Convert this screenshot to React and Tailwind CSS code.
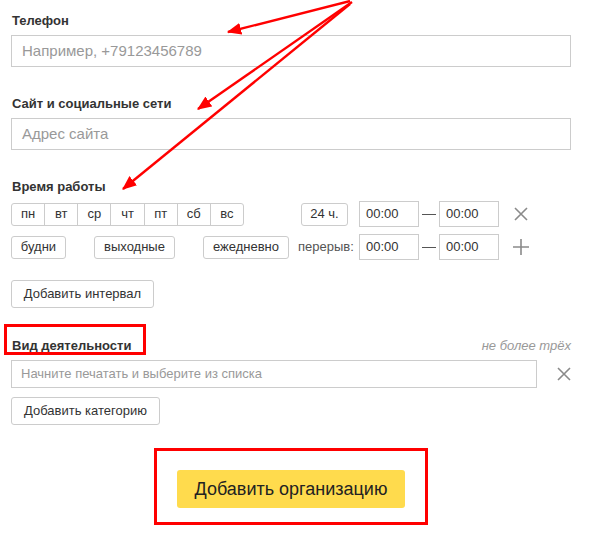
import React from "react";

const X = ({ className = "" }) => (
  <svg width="14" height="14" viewBox="0 0 14 14" className={className}>
    <path d="M1 1L13 13M13 1L1 13" stroke="#8a8a8a" strokeWidth="1.6" />
  </svg>
);

const Plus = () => (
  <svg width="16" height="16" viewBox="0 0 16 16">
    <path d="M8 0V16M0 8H16" stroke="#8a8a8a" strokeWidth="1.6" />
  </svg>
);

const Btn = ({ children, className = "" }) => (
  <div
    className={`flex items-center justify-center border border-[#ccc] rounded-[3px] bg-white text-[13px] text-[#333] ${className}`}
  >
    {children}
  </div>
);

const TimeInput = () => (
  <div className="w-[60px] h-[26px] border border-[#ccc] flex items-center pl-[6px] text-[13px] text-[#333]">
    00:00
  </div>
);

const Dash = () => (
  <div className="w-[20px] flex justify-center">
    <div className="w-[14px] h-px bg-[#555]" />
  </div>
);

export default function App() {
  const days = ["пн", "вт", "ср", "чт", "пт", "сб", "вс"];
  return (
    <div
      className="relative w-[591px] h-[535px] bg-white overflow-hidden"
      style={{ fontFamily: '"Liberation Sans", Arial, sans-serif' }}
    >
      <div className="px-[11px] w-[582px]">
        <div className="pt-[13px] leading-[16px] text-[13px] font-bold text-[#333] pl-px mb-[6px]">
          Телефон
        </div>
        <div className="w-[560px] h-[32px] border border-[#ccc] flex items-center pl-[10px] text-[15px] text-[#999]">
          Например, +79123456789
        </div>

        <div className="mt-[29px] leading-[16px] text-[13px] font-bold text-[#333] pl-px mb-[6px]">
          Сайт и социальные сети
        </div>
        <div className="w-[560px] h-[32px] border border-[#ccc] flex items-center pl-[10px] text-[15px] text-[#999]">
          Адрес сайта
        </div>

        <div className="mt-[29px] leading-[16px] text-[13px] font-bold text-[#333] pl-px mb-[6px]">
          Время работы
        </div>

        <div className="flex items-center h-[26px]">
          <div className="flex w-[233px] h-[23px] border border-[#ccc] rounded-[3px]">
            {days.map((d, i) => (
              <div
                key={d}
                className={`flex-1 flex items-center justify-center text-[13px] text-[#333] ${i > 0 ? "border-l border-[#ccc]" : ""}`}
              >
                {d}
              </div>
            ))}
          </div>
          <Btn className="ml-[57px] w-[47px] h-[23px]">24 ч.</Btn>
          <div className="ml-[11px]">
            <TimeInput />
          </div>
          <Dash />
          <TimeInput />
          <X className="ml-[15px]" />
        </div>

        <div className="flex items-center h-[26px] mt-[7px]">
          <Btn className="w-[55px] h-[23px]">будни</Btn>
          <Btn className="ml-[28px] w-[81px] h-[23px]">выходные</Btn>
          <Btn className="ml-[28px] w-[86px] h-[23px]">ежедневно</Btn>
          <div className="ml-[9px] w-[61px] text-[13px] text-[#555]">перерыв:</div>
          <TimeInput />
          <Dash />
          <TimeInput />
          <div className="ml-[14px]">
            <Plus />
          </div>
        </div>

        <Btn className="mt-[20px] w-[143px] h-[28px] text-[13.5px]">Добавить интервал</Btn>

        <div className="mt-[30px] flex justify-between items-center leading-[16px] mb-[6px]">
          <div className="relative text-[13px] font-bold text-[#333] pl-px">
            Вид деятельности
            <div className="absolute left-[-7px] top-[-14px] w-[142px] h-[31px] border-[3px] border-[#f00]" />
          </div>
          <div className="text-[13px] italic text-[#999]">не более трёх</div>
        </div>
        <div className="flex items-center">
          <div className="w-[526px] h-[28px] border border-[#ccc] flex items-center pl-[9px] text-[13px] text-[#999]">
            Начните печатать и выберите из списка
          </div>
          <X className="ml-[20px]" />
        </div>

        <Btn className="mt-[9px] w-[149px] h-[28px] text-[13.5px]">Добавить категорию</Btn>

        <div className="mt-[23px] w-[560px] flex justify-center">
          <div className="border-[3px] border-[#f00] pt-[19px] pb-[14px] px-[20px]">
            <div className="w-[228px] h-[38px] rounded-[3px] bg-[#ffdb4d] flex items-center justify-center text-[18px] text-[#222]">
              Добавить организацию
            </div>
          </div>
        </div>
      </div>

      <svg className="absolute inset-0 pointer-events-none" width="591" height="535">
        <defs>
          <marker id="ah" markerWidth="6" markerHeight="5" refX="5.5" refY="2.5" orient="auto" markerUnits="strokeWidth">
            <path d="M0 0L6 2.5L0 5Z" fill="#f00" />
          </marker>
        </defs>
        <line x1="350" y1="1" x2="228" y2="32" stroke="#f00" strokeWidth="2.4" markerEnd="url(#ah)" />
        <line x1="352" y1="2" x2="198" y2="109" stroke="#f00" strokeWidth="2.4" markerEnd="url(#ah)" />
        <line x1="350" y1="4" x2="123" y2="189" stroke="#f00" strokeWidth="2.4" markerEnd="url(#ah)" />
      </svg>
    </div>
  );
}
